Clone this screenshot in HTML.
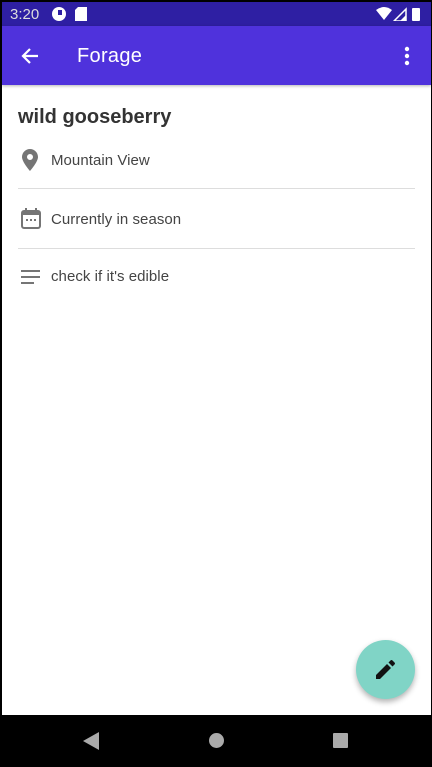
<!DOCTYPE html>
<html><head><style>
*{margin:0;padding:0;box-sizing:border-box}
body{width:432px;height:767px;background:#000;position:relative;overflow:hidden;font-family:"Liberation Sans",sans-serif}
.frame{position:absolute;left:2px;top:2px;width:429px;height:713px;background:#fff}
.status{position:absolute;left:0;top:0;width:429px;height:24px;background:#2e1fa3;color:#ddd;font-size:15px}
.app{position:absolute;left:0;top:24px;width:429px;height:59px;background:#4f32dc;box-shadow:0 1px 3px rgba(0,0,0,.3)}
.title{position:absolute;left:75px;top:19px;color:#fff;font-size:20px;letter-spacing:.3px}
.h{position:absolute;left:16px;top:104px;font-size:20px;font-weight:bold;color:#333}
.row{position:absolute;left:49px;font-size:15px;color:#444;letter-spacing:.05px}
.div{position:absolute;left:16px;width:397px;height:1px;background:#ddd}
.fab{position:absolute;left:354px;top:638px;width:59px;height:59px;border-radius:50%;background:#80d4c6;box-shadow:0 3px 6px rgba(0,0,0,.3)}
</style></head><body>
<div class="frame">
<div class="status">
<span style="position:absolute;left:8px;top:4px">3:20</span>
<svg style="position:absolute;left:50px;top:5px" width="14" height="14"><circle cx="7" cy="7" r="7" fill="#fff"/><rect x="6" y="3" width="4" height="5" fill="#2e1fa3"/></svg>
<svg style="position:absolute;left:73px;top:5px" width="12" height="14"><path d="M3 0H12V14H0V3Z" fill="#fff"/></svg>
<svg style="position:absolute;left:374px;top:5px" width="50" height="14"><path d="M0 3Q8-3 16 3L8 13Z" fill="#fff"/><path d="M18 14L30 2V14Z" fill="none" stroke="#fff" stroke-width="1.5"/><path d="M24 14L30 8V14Z" fill="#fff"/><rect x="36" y="1" width="8" height="13" rx="1" fill="#fff"/></svg>
</div>
<div class="app">
<svg style="position:absolute;left:19px;top:21px" width="18" height="18" viewBox="0 0 18 18"><path d="M17 9H2M9 2L2 9L9 16" stroke="#fff" stroke-width="2.2" fill="none"/></svg>
<div class="title">Forage</div>
<svg style="position:absolute;left:402px;top:20px" width="6" height="20"><circle cx="3" cy="3" r="2.2" fill="#fff"/><circle cx="3" cy="10" r="2.2" fill="#fff"/><circle cx="3" cy="17" r="2.2" fill="#fff"/></svg>
</div>
<div class="h">wild gooseberry</div>
<svg style="position:absolute;left:20px;top:147px" width="16" height="22" viewBox="0 0 16 22"><path d="M8 0C3.6 0 0 3.5 0 8C0 13 8 22 8 22S16 13 16 8C16 3.5 12.4 0 8 0ZM8 11A3 3 0 1 1 8 5A3 3 0 1 1 8 11Z" fill="#757575"/></svg>
<div class="row" style="top:150px">Mountain View</div>
<div class="div" style="top:186px"></div>
<svg style="position:absolute;left:19px;top:206px" width="20" height="21" viewBox="0 0 20 21"><rect x="1" y="3" width="18" height="17" rx="2" fill="none" stroke="#757575" stroke-width="2"/><rect x="1" y="3" width="18" height="4" fill="#757575"/><rect x="4" y="0" width="2" height="4" fill="#757575"/><rect x="14" y="0" width="2" height="4" fill="#757575"/><rect x="5" y="11" width="2" height="2" fill="#757575"/><rect x="9" y="11" width="2" height="2" fill="#757575"/><rect x="13" y="11" width="2" height="2" fill="#757575"/></svg>
<div class="row" style="top:209px">Currently in season</div>
<div class="div" style="top:246px"></div>
<svg style="position:absolute;left:19px;top:268px" width="20" height="16"><rect x="0" y="0" width="19" height="2" fill="#757575"/><rect x="0" y="6" width="19" height="2" fill="#757575"/><rect x="0" y="12" width="13" height="2" fill="#757575"/></svg>
<div class="row" style="top:266px">check if it's edible</div>
<div class="fab"><svg style="position:absolute;left:20px;top:20px" width="19" height="19" viewBox="0 0 19 19"><path d="M0 19V15L11 4L15 8L4 19Z M12.5 2.5L14.5 0.5Q15.5 -0.5 16.5 0.5L18.5 2.5Q19.5 3.5 18.5 4.5L16.5 6.5Z" fill="#111"/></svg></div>
</div>
<svg style="position:absolute;left:83px;top:732px" width="16" height="18"><path d="M16 0V18L0 9Z" fill="#aaa"/></svg>
<div style="position:absolute;left:209px;top:733px;width:15px;height:15px;border-radius:50%;background:#aaa"></div>
<div style="position:absolute;left:333px;top:733px;width:15px;height:15px;border-radius:1px;background:#aaa"></div>
</body></html>
